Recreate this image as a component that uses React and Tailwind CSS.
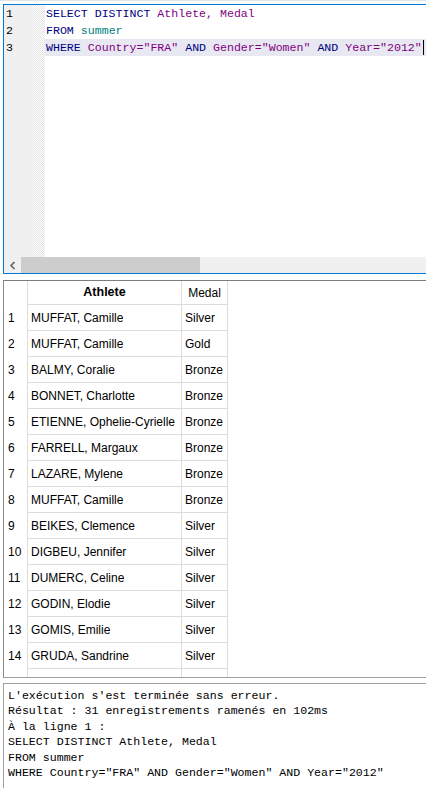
import React from "react";

const rows = [
  ["MUFFAT, Camille", "Silver"],
  ["MUFFAT, Camille", "Gold"],
  ["BALMY, Coralie", "Bronze"],
  ["BONNET, Charlotte", "Bronze"],
  ["ETIENNE, Ophelie-Cyrielle", "Bronze"],
  ["FARRELL, Margaux", "Bronze"],
  ["LAZARE, Mylene", "Bronze"],
  ["MUFFAT, Camille", "Bronze"],
  ["BEIKES, Clemence", "Silver"],
  ["DIGBEU, Jennifer", "Silver"],
  ["DUMERC, Celine", "Silver"],
  ["GODIN, Elodie", "Silver"],
  ["GOMIS, Emilie", "Silver"],
  ["GRUDA, Sandrine", "Silver"],
  ["LABORDE, Marion", "Silver"],
];

const mono = "font-['Courier_New','Liberation_Mono',monospace] text-[11.6px]";

const K = ({ children }) => <span className="text-[#00007f]">{children}</span>;
const P = ({ children }) => <span className="text-[#7f007f]">{children}</span>;

function Editor() {
  return (
    <div className="ml-[3px] mt-[3px] h-[270px] flex flex-col border-t border-l border-b border-[#0078d7]">
      <div className="flex-1 flex min-h-0">
        <div className={`w-[28px] bg-[#f0f0f0] ${mono} text-black leading-[17px] pl-[2px]`}>
          <div>1</div>
          <div>2</div>
          <div>3</div>
        </div>
        <div className="w-[13px] bg-[repeating-conic-gradient(#e4e4e4_0_25%,#ffffff_0_50%)] bg-[length:2px_2px]" />
        <div className={`flex-1 ${mono} leading-[17px] whitespace-pre`}>
          <div className="pl-[1px]">
            <K>SELECT DISTINCT</K> <P>Athlete,</P> <P>Medal</P>
          </div>
          <div className="pl-[1px]">
            <K>FROM</K> <span className="text-[#008080]">summer</span>
          </div>
          <div className="pl-[1px] bg-[#e8e8f2] flex items-center">
            <span>
              <K>WHERE</K> <P>Country="FRA"</P> <K>AND</K> <P>Gender="Women"</P> <K>AND</K>{" "}
              <P>Year="2012"</P>
            </span>
            <span className="ml-[1px] w-px h-[15px] bg-black" />
          </div>
        </div>
      </div>
      <div className="h-[16px] flex bg-[#f0f0f0]">
        <div className="w-[17px] flex items-center justify-center">
          <svg width="8" height="9" viewBox="0 0 8 9">
            <path d="M5.5 1 L2 4.5 L5.5 8" fill="none" stroke="#606060" strokeWidth="1.6" />
          </svg>
        </div>
        <div className="w-[179px] bg-[#cdcdcd]" />
      </div>
    </div>
  );
}

function Results() {
  const cell = "h-[26px] flex items-center border-r border-b border-[#dcdcdc]";
  return (
    <div className="ml-[3px] mt-[6px] h-[398px] overflow-hidden border-t border-l border-b border-t-[#7d7d7d] border-l-[#8a8a8a] border-b-[#a0a0a0] font-['Tahoma','Liberation_Sans',sans-serif] text-[12px] text-black">
      <div className="flex">
        <div className="w-[24px] h-[24px] border-r border-[#dcdcdc]" />
        <div className="w-[154px] h-[24px] border-r border-b border-[#dcdcdc] flex items-center justify-center font-bold text-[12.5px]">
          Athlete
        </div>
        <div className="w-[46px] h-[24px] border-r border-b border-[#dcdcdc] flex items-center justify-center">
          Medal
        </div>
      </div>
      {rows.map(([name, medal], i) => (
        <div key={i} className="flex">
          <div className="w-[24px] h-[26px] flex items-center pl-[4px] border-r border-[#dcdcdc]">{i + 1}</div>
          <div className={`w-[154px] pl-[3px] ${cell}`}>{name}</div>
          <div className={`w-[46px] pl-[3px] ${cell}`}>{medal}</div>
        </div>
      ))}
    </div>
  );
}

function Output() {
  return (
    <div className={`ml-[3px] mt-[5px] flex-1 border-t border-l border-[#a0a0a0] pt-[4px] pl-[4px] ${mono} leading-[15.4px] text-black whitespace-pre`}>
      <div>L'exécution s'est terminée sans erreur.</div>
      <div>Résultat : 31 enregistrements ramenés en 102ms</div>
      <div>À la ligne 1 :</div>
      <div>SELECT DISTINCT Athlete, Medal</div>
      <div>FROM summer</div>
      <div>WHERE Country="FRA" AND Gender="Women" AND Year="2012"</div>
    </div>
  );
}

export default function App() {
  return (
    <div className="w-[426px] h-[788px] bg-white overflow-hidden flex flex-col">
      <div className="h-px bg-[#e3e3e3] shrink-0" />
      <Editor />
      <Results />
      <Output />
    </div>
  );
}
